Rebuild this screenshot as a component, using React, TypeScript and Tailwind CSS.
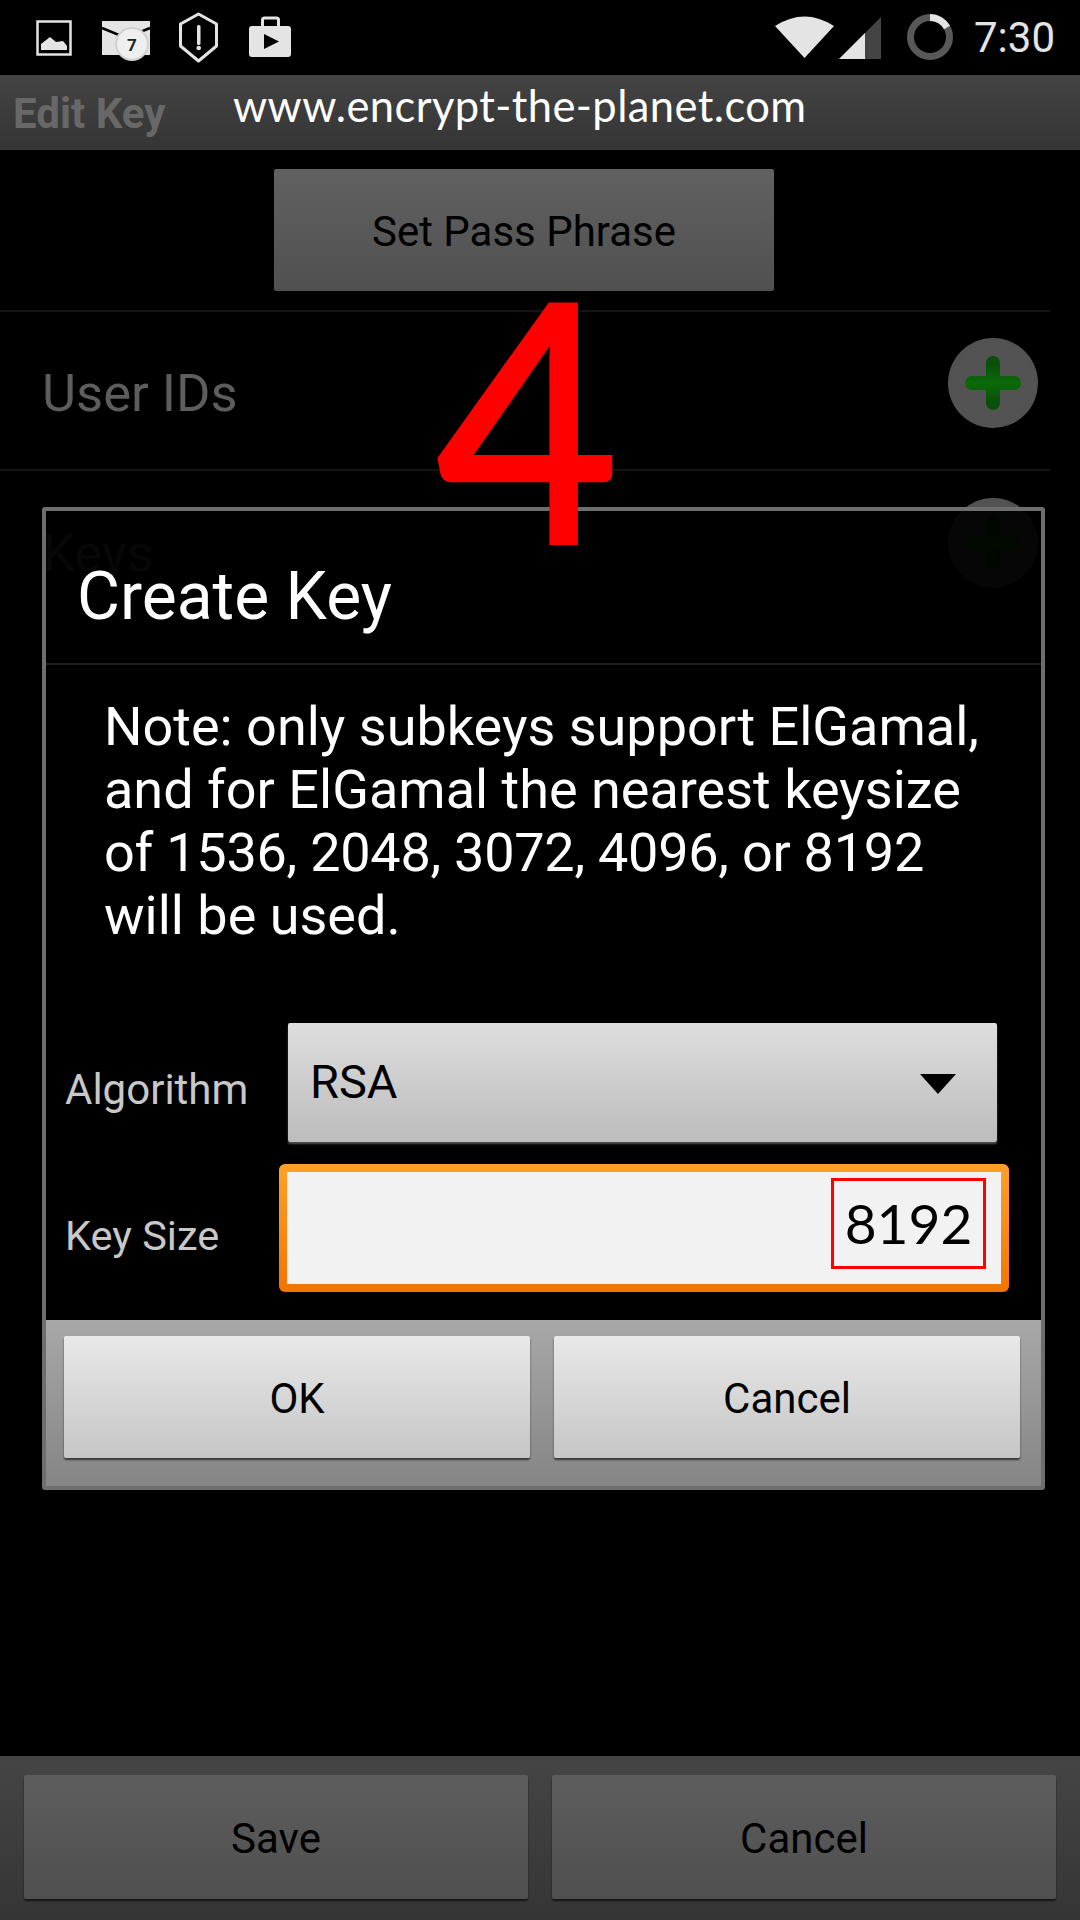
const sans = "font-['Roboto','Noto_Sans',sans-serif]";

function StatusIcons() {
  return (
    <svg width="300" height="75" viewBox="0 0 300 75" className="shrink-0">
      <rect x="37.5" y="21.5" width="33" height="33" fill="none" stroke="#e4e4e4" strokeWidth="2.5" />
      <path d="M41 50 L41 44 L50 37 L56 42 L63 41 L67 46 L67 50 Z" fill="#e4e4e4" />
      <path d="M102 21 L150 21 L150 55 L102 55 Z" fill="#e4e4e4" />
      <path d="M102 28 L126 38 L150 28" fill="none" stroke="#000" strokeWidth="2.5" />
      <circle cx="132" cy="44" r="17" fill="#d0d0d0" />
      <circle cx="132" cy="44" r="15" fill="#efefef" />
      <text x="132" y="50.5" textAnchor="middle" fontFamily="Roboto, sans-serif" fontWeight="700" fontSize="17" fill="#222">7</text>
      <path d="M198.5 14 L216.5 24 L216.5 46 L198.5 61 L180.5 46 L180.5 24 Z" fill="none" stroke="#e4e4e4" strokeWidth="3" strokeLinejoin="round" />
      <rect x="197" y="25" width="3.5" height="20" rx="1.5" fill="#e4e4e4" />
      <circle cx="198.7" cy="48" r="2.3" fill="#e4e4e4" />
      <path d="M262.5 26 L262.5 20 Q262.5 18 264.5 18 L276.5 18 Q278.5 18 278.5 20 L278.5 26" fill="none" stroke="#e4e4e4" strokeWidth="3" />
      <rect x="249" y="26" width="42" height="31" rx="3" fill="#e4e4e4" />
      <path d="M264 34 L279 41.5 L264 49 Z" fill="#000" />
    </svg>
  );
}

function StatusRight() {
  return (
    <div className="flex items-center pr-[25px]">
      <svg width="190" height="75" viewBox="770 0 190 75" className="shrink-0">
        <path d="M775 26 Q804.5 7 834 26 L804.5 58 Z" fill="#e4e4e4" />
        <path d="M839 59 L881 17 L881 59 Z" fill="#444" />
        <path d="M839 59 L865 33 L865 59 Z" fill="#e4e4e4" />
        <circle cx="930" cy="37" r="19.5" fill="none" stroke="#585858" strokeWidth="7" />
        <path d="M930 17.5 A19.5 19.5 0 0 1 947 27.5" fill="none" stroke="#e4e4e4" strokeWidth="7" />
      </svg>
      <span className="ml-[14px] w-[81px] font-['Roboto',sans-serif] text-[42px] leading-[75px] text-[#e4e4e4]">7:30</span>
    </div>
  );
}

function GreyButton({ label, className }: { label: string; className: string }) {
  return (
    <div className={`flex items-center justify-center rounded-[2px] pt-[2px] text-[42px] text-black shadow-[0_2px_2px_rgba(0,0,0,0.6)] ${sans} ${className}`}>
      {label}
    </div>
  );
}

function Plus() {
  return (
    <div className="mb-[16px] flex h-[90px] w-[90px] items-center justify-center rounded-full bg-[radial-gradient(circle,#545454_0%,#525252_85%,#626262_100%)]">
      <svg width="56" height="54" viewBox="0 0 56 54">
        <defs>
          <linearGradient id="plusGreen" x1="0" y1="0" x2="0" y2="1">
            <stop offset="0" stopColor="#0a4f0a" />
            <stop offset="0.5" stopColor="#0a6a08" />
            <stop offset="1" stopColor="#0a4f0a" />
          </linearGradient>
        </defs>
        <path d="M28 7 V47 M7 27 H49" fill="none" stroke="url(#plusGreen)" strokeWidth="14" strokeLinecap="round" />
      </svg>
    </div>
  );
}

function Row({ label, last }: { label: string; last?: boolean }) {
  return (
    <div className={`flex h-[159px] w-[1050px] items-center justify-between pl-[42px] pr-[12px] ${last ? "" : "border-b-[2px] border-[#141414]"}`}>
      <span className={`pt-[5px] text-[52.5px] text-[#5d5d5d] ${sans}`}>{label}</span>
      <Plus />
    </div>
  );
}

export default function App() {
  return (
    <div className="relative flex h-[1920px] w-[1080px] flex-col overflow-hidden bg-black">
      <div className="flex h-[75px] shrink-0 items-center justify-between">
        <StatusIcons />
        <StatusRight />
      </div>
      <div className="flex h-[75px] shrink-0 items-center bg-gradient-to-b from-[#434343] to-[#353535]">
        <span className={`ml-[13px] w-[220px] pt-[2px] text-[42px] font-bold text-[#686868] ${sans}`}>Edit Key</span>
        <span className="mb-[14px] font-['Lato',sans-serif] text-[43.5px] tracking-[0.4px] text-white">www.encrypt-the-planet.com</span>
      </div>

      <div className="flex min-h-0 flex-1 flex-col">
        <div className="flex w-[1050px] justify-center border-b-[2px] border-[#141414] pt-[19px] pb-[19px]">
          <GreyButton label="Set Pass Phrase" className="ml-[-2px] h-[122px] w-[500px] bg-gradient-to-b from-[#616161] to-[#505050]" />
        </div>
        <Row label="User IDs" />
        <Row label="Keys" last />
      </div>

      <div className="flex h-[164px] shrink-0 gap-[24px] bg-gradient-to-b from-[#454545] to-[#353535] px-[24px] pt-[19px] pb-[21px]">
        <GreyButton label="Save" className="flex-1 bg-gradient-to-b from-[#5d5d5d] to-[#4f4f4f]" />
        <GreyButton label="Cancel" className="flex-1 bg-gradient-to-b from-[#5d5d5d] to-[#4f4f4f]" />
      </div>

      {/* Dialog over the page */}
      <div className={`absolute left-[42px] top-[507px] flex h-[983px] w-[1003px] flex-col rounded-[3px] border-[4px] border-[#6e6e6e] bg-black/[0.92] ${sans}`}>
        <div className="flex h-[154px] shrink-0 items-center border-b-[2px] border-[#1e1e1e] pl-[31px] pt-[18px] text-[66px] text-white">
          Create Key
        </div>
        <p className="ml-[58px] mt-[30px] w-[900px] text-[54px] leading-[63px] text-white">
          Note: only subkeys support ElGamal,
          <br />
          and for ElGamal the nearest keysize
          <br />
          <span className="tracking-[-0.25px]">of 1536, 2048, 3072, 4096, or 8192</span>
          <br />
          will be used.
        </p>
        <div className="mt-[76px] flex h-[119px] items-center">
          <span className="ml-[19px] w-[223px] pt-[14px] text-[42px] text-[#c8c8c8]">Algorithm</span>
          <div className="flex h-[119px] w-[709px] items-center justify-between rounded-[2px] bg-gradient-to-b from-[#dedede] to-[#bcbcbc] pl-[22px] pr-[41px] shadow-[0_2px_2px_rgba(90,90,90,0.9)]">
            <span className="text-[47px] text-black">RSA</span>
            <svg width="36" height="20" viewBox="0 0 36 20" className="mt-[3px]"><path d="M0 0 L36 0 L18 20 Z" fill="#000" /></svg>
          </div>
        </div>
        <div className="mt-[22px] flex h-[128px] items-center">
          <span className="ml-[19px] w-[214px] pt-[16px] text-[41.5px] text-[#c8c8c8]">Key Size</span>
          <div className="flex h-[128px] w-[730px] items-stretch rounded-[6px] bg-gradient-to-b from-[#ffa028] to-[#f07500] p-[8px]">
            <div className="flex flex-1 justify-end bg-[#f2f2f2] pr-[15px] pt-[6px]">
              <span className="flex h-[91px] w-[155px] items-center justify-center border-[3px] border-[#ff0000] font-['Lato',sans-serif] text-[55px] text-black">8192</span>
            </div>
          </div>
        </div>
        <div className="mt-[28px] flex min-h-0 flex-1 gap-[24px] bg-gradient-to-b from-[#a8a8a8] to-[#858585] pb-[28px] pl-[18px] pr-[21px] pt-[16px]">
          <GreyButton label="OK" className="flex-1 bg-gradient-to-b from-[#e8e8e8] to-[#c6c6c6]" />
          <GreyButton label="Cancel" className="flex-1 bg-gradient-to-b from-[#e8e8e8] to-[#c6c6c6]" />
        </div>
      </div>

      {/* Big red annotation */}
      <span className="absolute left-[431px] top-[214px] scale-x-[0.95] font-['Lato',sans-serif] text-[333px] leading-[400px] text-[#ff0000] [-webkit-text-stroke:4px_#ff0000]">4</span>
    </div>
  );
}
